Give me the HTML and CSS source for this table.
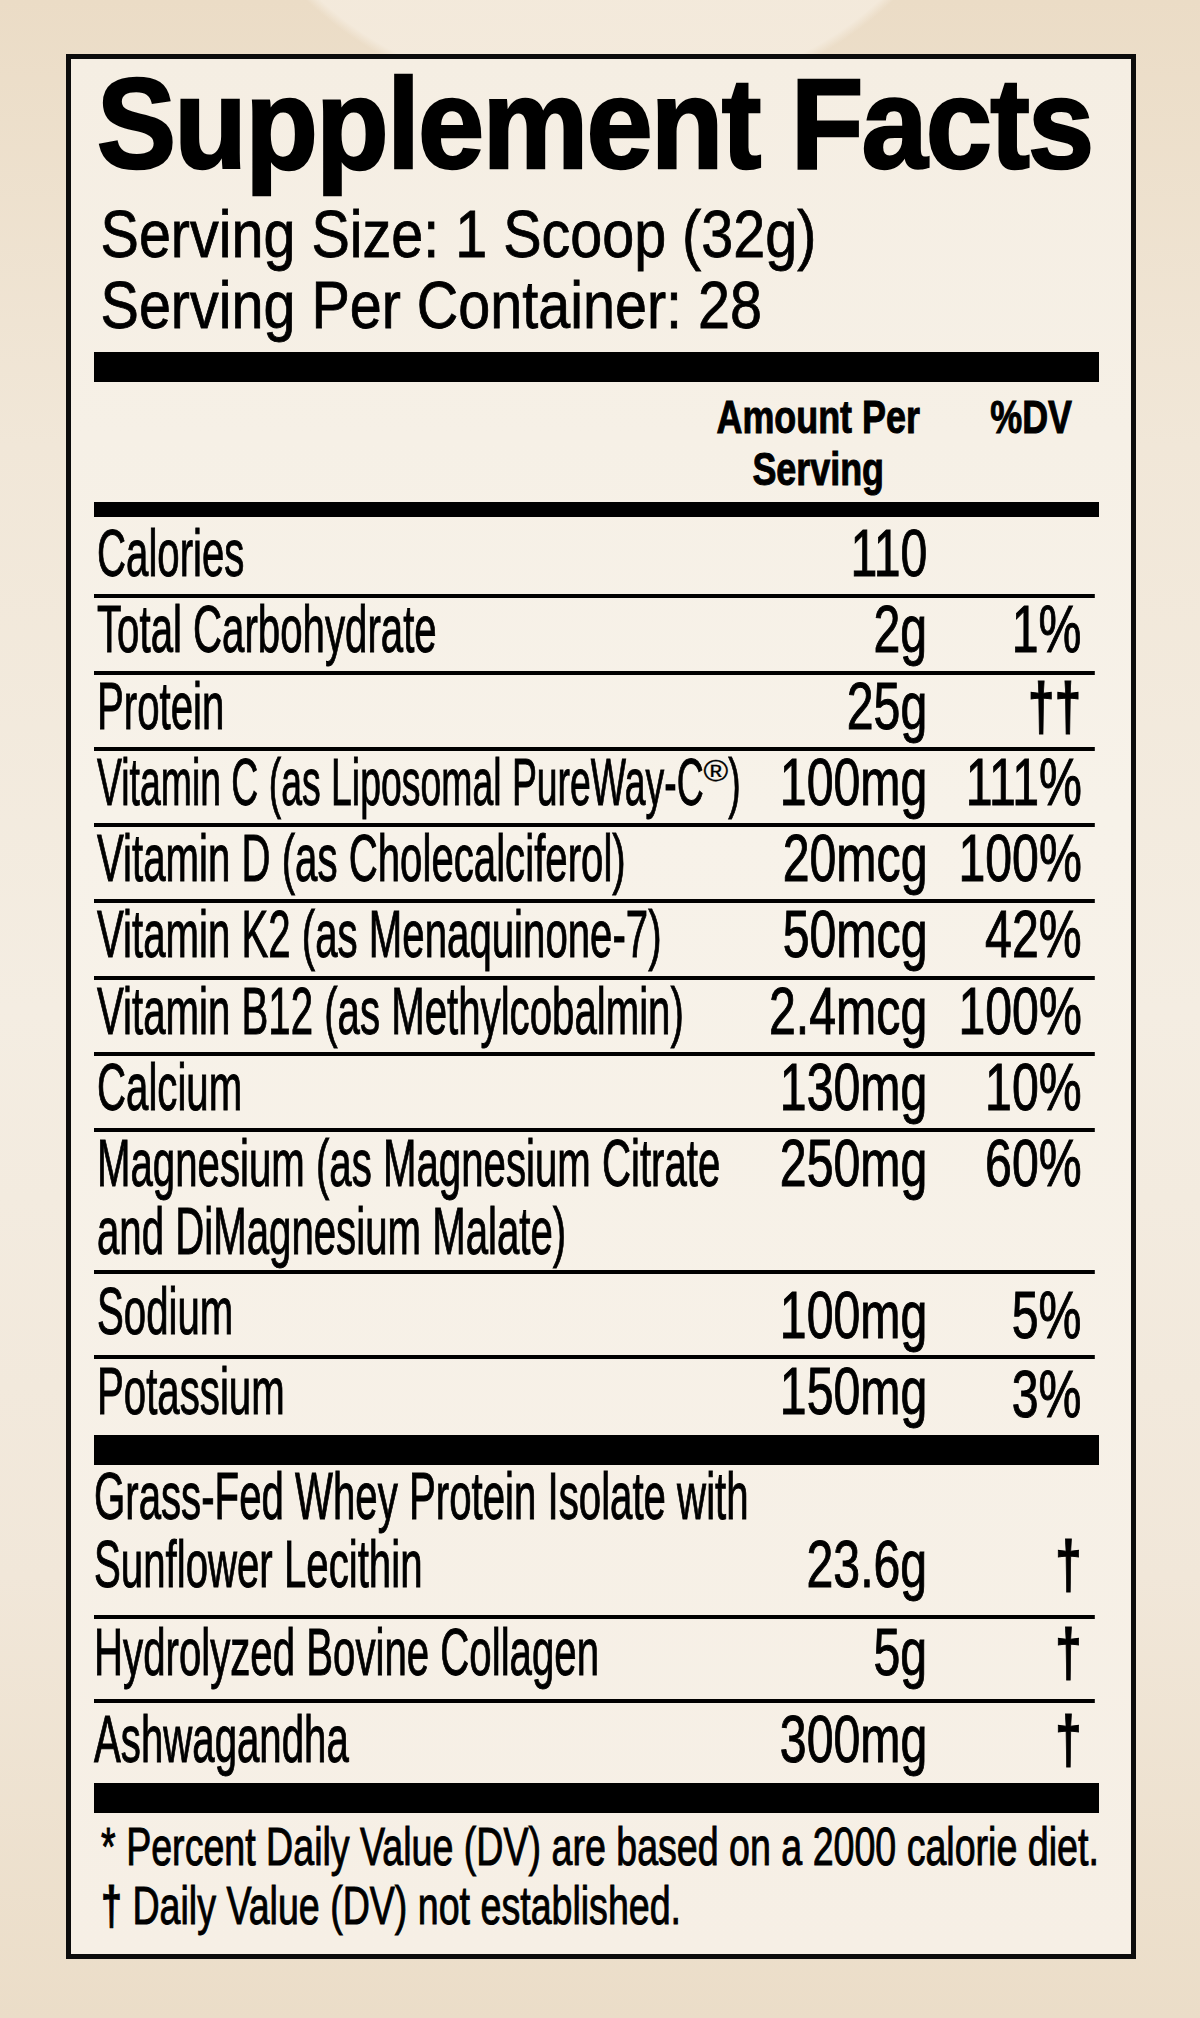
FILE: index.html
```html
<!DOCTYPE html>
<html lang="en">
<head>
<meta charset="utf-8">
<title>Supplement Facts</title>
<link rel="stylesheet" href="styles.css">
</head>
<body>
<main class="page">
  <section class="facts">
    <div class="sx sx-title"><h1 class="title">Supplement Facts</h1></div>
    <div class="sx sx-serv"><p class="serving">Serving Size: 1 Scoop (32g)<br>Serving Per Container: 28</p></div>
    <div class="bar bar-thick bar-after-serv"></div>
    <div class="sx sx-head">
      <div class="head">
        <span></span>
        <span class="head-amt">Amount Per<br>Serving</span>
        <span class="head-dv">%DV</span>
      </div>
    </div>
    <div class="bar bar-mid"></div>
    <div class="sx sx-body">
      <div class="row row-first"><span class="name">Calories</span><span class="amt"><span class="v">110</span></span><span class="dv"></span></div>
      <div class="row"><span class="name">Total Carbohydrate</span><span class="amt"><span class="v">2g</span></span><span class="dv"><span class="v">1%</span></span></div>
      <div class="row"><span class="name">Protein</span><span class="amt"><span class="v">25g</span></span><span class="dv"><span class="v dg">††</span></span></div>
      <div class="row"><span class="name"><span class="tight">Vitamin C (as Liposomal PureWay-C<span class="reg">®</span>)</span></span><span class="amt"><span class="v">100mg</span></span><span class="dv"><span class="v">111%</span></span></div>
      <div class="row"><span class="name">Vitamin D (as Cholecalciferol)</span><span class="amt"><span class="v">20mcg</span></span><span class="dv"><span class="v">100%</span></span></div>
      <div class="row"><span class="name">Vitamin K2 (as Menaquinone-7)</span><span class="amt"><span class="v">50mcg</span></span><span class="dv"><span class="v">42%</span></span></div>
      <div class="row"><span class="name">Vitamin B12 (as Methylcobalmin)</span><span class="amt"><span class="v">2.4mcg</span></span><span class="dv"><span class="v">100%</span></span></div>
      <div class="row"><span class="name">Calcium</span><span class="amt"><span class="v">130mg</span></span><span class="dv"><span class="v">10%</span></span></div>
      <div class="row row-mg"><span class="name">Magnesium (as Magnesium Citrate<br>and DiMagnesium Malate)</span><span class="amt"><span class="v">250mg</span></span><span class="dv"><span class="v">60%</span></span></div>
      <div class="row row-sod"><span class="name">Sodium</span><span class="amt"><span class="v">100mg</span></span><span class="dv"><span class="v">5%</span></span></div>
      <div class="row row-pot"><span class="name">Potassium</span><span class="amt"><span class="v">150mg</span></span><span class="dv"><span class="v">3%</span></span></div>
    </div>
    <div class="bar bar-thick"></div>
    <div class="sx sx-body">
      <div class="row row-low row-whey"><span class="name">Grass-Fed Whey Protein Isolate with<br>Sunflower Lecithin</span><span class="amt"><span class="v">23.6g</span></span><span class="dv"><span class="v dg">†</span></span></div>
      <div class="row row-low row-hyd"><span class="name">Hydrolyzed Bovine Collagen</span><span class="amt"><span class="v">5g</span></span><span class="dv"><span class="v dg">†</span></span></div>
      <div class="row row-low row-ash"><span class="name">Ashwagandha</span><span class="amt"><span class="v">300mg</span></span><span class="dv"><span class="v dg">†</span></span></div>
    </div>
    <div class="bar bar-thick"></div>
    <div class="sx sx-foot">
      <p class="foot">* Percent Daily Value (DV) are based on a 2000 calorie diet.<br><span class="dg">†</span> Daily Value (DV) not established.</p>
    </div>
  </section>
</main>
</body>
</html>
```

FILE: styles.css
```css
html, body {
  margin: 0;
  padding: 0;
}

body {
  width: 1200px;
  min-height: 2018px;
  color: #000;
  font-family: "Liberation Sans", Arial, sans-serif;
  background:
    radial-gradient(ellipse 380px 300px at 50% -190px, rgba(246, 238, 226, 0.75) 0, rgba(246, 238, 226, 0.75) 97%, rgba(246, 238, 226, 0) 100%),
    linear-gradient(180deg, #ebdcc6 0%, #f1e7d8 22%, #f4ede2 50%, #f1e7d9 78%, #ebddc8 100%);
}

.page {
  padding-top: 54px;
  padding-bottom: 61px;
}

.facts {
  margin-left: 66px;
  width: 1070px;
  box-sizing: border-box;
  border: 5px solid #0c0c0c;
  padding: 1px 32px 14.4px 23px;
  background: linear-gradient(180deg, #f5eee3 0%, #f7f2e9 40%, #f6efe5 100%);
}

/* condensed type: each section is laid out wide, then narrowed */
.sx {
  transform-origin: 0 0;
  white-space: nowrap;
}

.sx-title { width: calc(100% / 0.93); transform: scaleX(0.93); }
.sx-serv  { width: calc(100% / 0.871); transform: scaleX(0.871); }
.sx-head  { width: calc(100% / 0.78); transform: scaleX(0.78); }
.sx-body  { width: calc(100% / 0.6);  transform: scaleX(0.6); }
.sx-foot  { width: calc(100% / 0.709); transform: scaleX(0.709); }

.title {
  margin: 0;
  padding-left: 3px;
  font-size: 128px;
  line-height: 128px;
  font-weight: 700;
  letter-spacing: -2px;
  -webkit-text-stroke: 2.5px #000;
}

.serving {
  margin: 10.6px 0 0;
  padding-left: 7.5px;
  font-size: 66px;
  line-height: 71px;
  font-weight: 400;
  -webkit-text-stroke: 0.8px #000;
}

.bar {
  background: #000;
}

.bar-thick {
  height: 30px;
}

.bar-after-serv {
  margin-top: 11.4px;
}

.bar-mid {
  height: 15px;
  margin-top: 7px;
}

.head {
  margin-top: 9px;
  display: grid;
  grid-template-columns: 1fr 276px 142px;
  column-gap: 64px;
  padding-right: 16px;
  font-size: 46px;
  line-height: 52px;
  font-weight: 700;
  text-align: center;
  -webkit-text-stroke: 1px #000;
}

.sx-body {
  font-size: 67px;
  line-height: 62px;
  font-weight: 400;
  -webkit-text-stroke: 1px #000;
}

.row {
  display: grid;
  grid-template-columns: minmax(0, 1fr) 300px 257px;
  margin-right: 7px;
  padding: 0 22px 10.3px 5px;
  border-bottom: 4px solid #000;
}

.amt,
.dv {
  text-align: right;
}

/* figures are set a little wider than the names */
.v {
  display: inline-block;
  transform: scaleX(1.2);
  transform-origin: 100% 50%;
}

.dg {
  font-weight: 700;
}

.tight {
  display: inline-block;
  transform: scaleX(0.93);
  transform-origin: 0 50%;
}

.reg {
  display: inline-block;
  font-size: 30px;
  line-height: 30px;
  vertical-align: 24px;
  transform: scaleX(2);
  margin: 0 11px;
  -webkit-text-stroke: 0.3px #000;
}

.row-first {
  padding-top: 5px;
}

.row-mg {
  padding-bottom: 5px;
}

.row-mg .name,
.row-whey .name {
  line-height: 68px;
  margin-top: -3px;
}

.row-sod {
  padding-top: 6px;
  padding-bottom: 13px;
}

.row-sod .amt,
.row-sod .dv {
  padding-top: 4px;
  margin-bottom: -4px;
}

.row-pot {
  padding-top: 1px;
  padding-bottom: 13px;
  border-bottom: 0;
}

.row-pot .dv {
  padding-top: 3px;
  margin-bottom: -3px;
}

.row-low {
  padding-left: 0;
}

.row-whey {
  padding-bottom: 17px;
}

.row-whey .amt,
.row-whey .dv {
  padding-top: 68px;
}

.row-hyd {
  padding-top: 2px;
  padding-bottom: 16px;
}

.row-ash {
  padding-top: 5px;
  padding-bottom: 13px;
  border-bottom: 0;
}

.foot {
  margin: 0;
  padding: 4px 0 0 10px;
  font-size: 53px;
  line-height: 59px;
  font-weight: 400;
  -webkit-text-stroke: 1px #000;
}

.sx-foot {
  padding-bottom: 4px;
}
```
